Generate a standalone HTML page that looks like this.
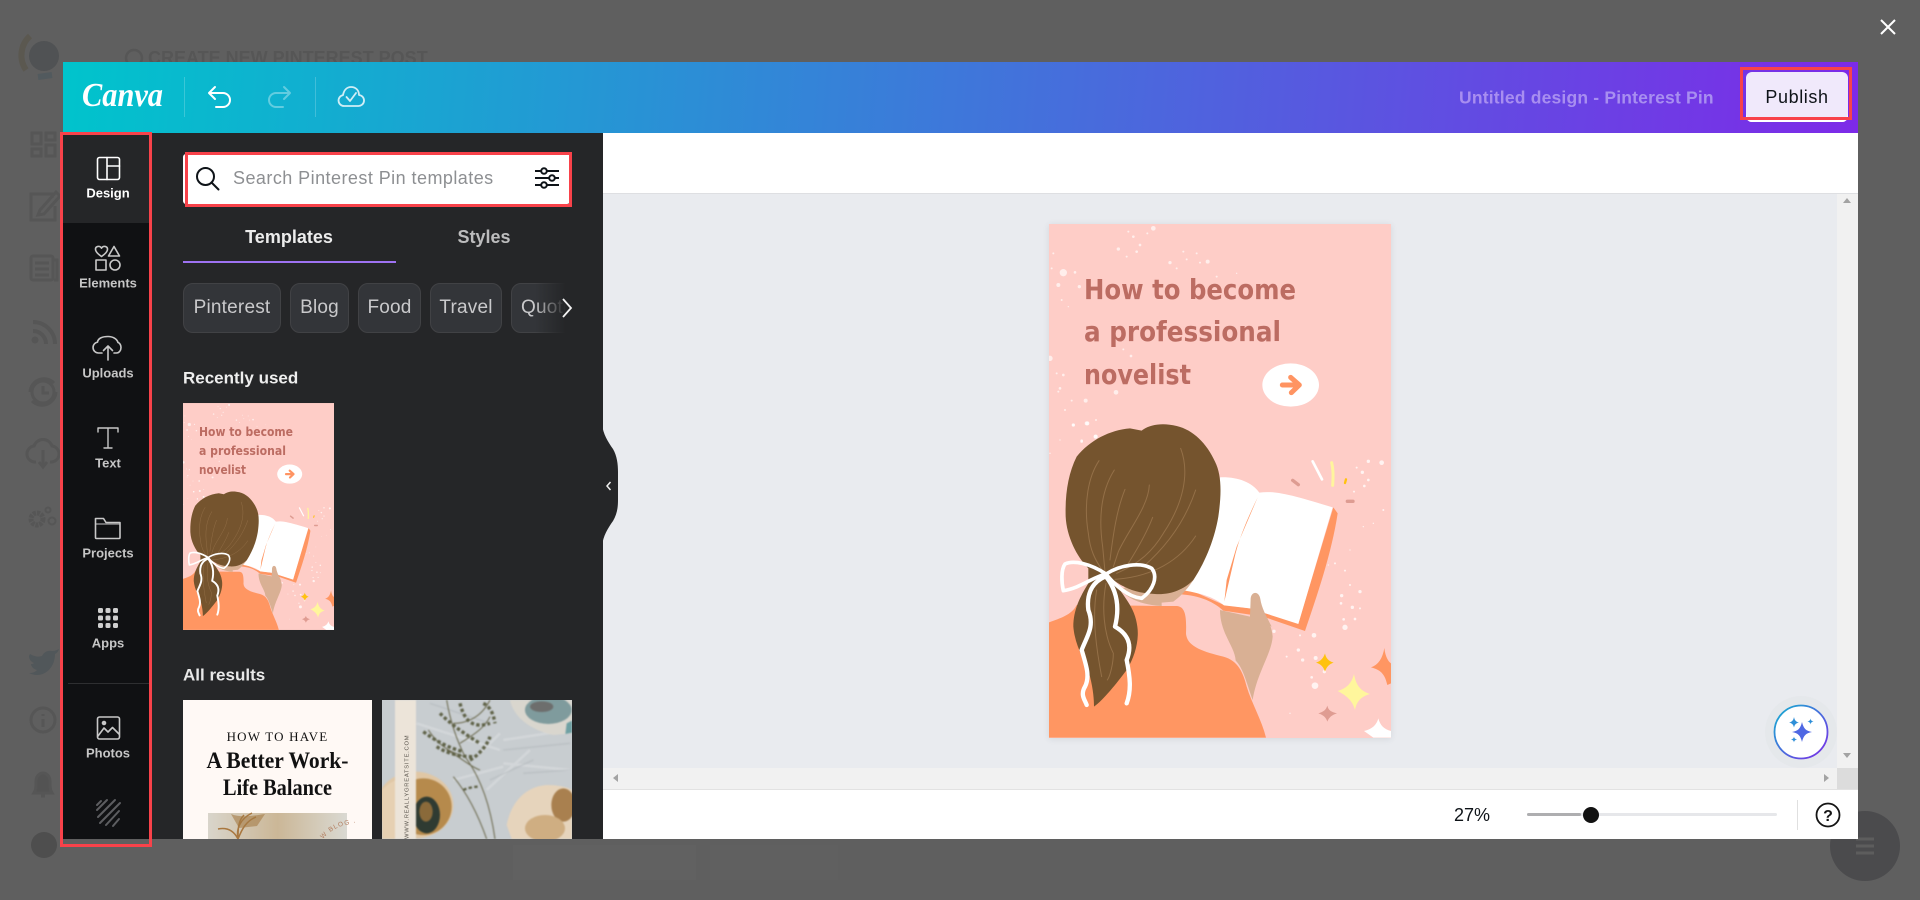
<!DOCTYPE html>
<html lang="en"><head><meta charset="utf-8"><title>Canva</title>
<style>
html,body{margin:0;padding:0;width:1920px;height:900px;overflow:hidden;background:#5f5f5f;font-family:"Liberation Sans",sans-serif}
.a{position:absolute}
.t{position:absolute;white-space:nowrap;line-height:1}
.c{transform:translate(-50%,-50%)}
.m{transform:translateY(-50%)}
.nav{position:absolute;left:108px;transform:translate(-50%,-50%);font-size:13px;font-weight:700;color:#c6c6c6;white-space:nowrap}
.chip{position:absolute;top:283px;height:48px;background:#333539;border:1px solid #414245;border-radius:10px;color:#c9c9cb;font-size:19px;letter-spacing:.2px;line-height:48px;text-align:center;box-sizing:content-box;overflow:hidden}
svg{position:absolute;overflow:visible}
</style></head>
<body>
<!-- dim page behind -->
<svg width="1920" height="900" style="left:0;top:0" fill="none" stroke="#565656" stroke-width="3">
<g><circle cx="44" cy="56" r="15" fill="#505254" stroke="none"/><path d="M30 36a26 26 0 0 0-4 34" stroke="#5b5850" stroke-width="6"/><path d="M38 77l14-2" stroke="#525a5e" stroke-width="6"/>
<rect x="32" y="133" width="9" height="11"/><rect x="46" y="133" width="9" height="7"/><rect x="32" y="149" width="9" height="7"/><rect x="46" y="145" width="9" height="11"/>
<path d="M52 198v-4H31v26h24v-14M40 210l16-18 4 4-16 18-6 1z"/>
<rect x="31" y="256" width="22" height="24" rx="2"/><path d="M35 263h14M35 269h14M35 275h14M54 260h3v20h-3"/>
<path d="M33 322a22 22 0 0 1 22 22M33 331a13 13 0 0 1 13 13" stroke-width="4"/><circle cx="35" cy="340" r="3.500" fill="#565656" stroke="none"/>
<circle cx="43" cy="392" r="11"/><path d="M30 392a14 14 0 0 1 24-9M56 392a14 14 0 0 1-24 9M43 386v7h6"/>
<path d="M36 462a8 8 0 0 1-2-16 9.500 9.500 0 0 1 18 0 8 8 0 0 1-2 16M43 450v16m-4-4l4 5 4-5"/>
<circle cx="37" cy="519" r="6" stroke-width="5" stroke-dasharray="3 1"/><circle cx="48" cy="510" r="2.500" stroke-width="2"/><circle cx="52" cy="521" r="3.500" stroke-width="2"/>
<path d="M31 650c5 3 9 3 12 2 2-4 6-6 10-5 3 0 5-1 7-2-1 3-2 4-4 5 0 12-8 21-18 21-3 0-6-1-8-2 4 0 6-1 8-3-4-1-6-4-6-6 1 0 2 0 3-1-3-1-5-4-5-7z" fill="#51575a" stroke="none" transform="translate(-1,4)"/>
<circle cx="43" cy="720" r="12"/><path d="M43 714v2M43 719v8"/>
<path d="M34 793c2-3 2-6 2-12 0-4 3-8 7-8s7 4 7 8c0 6 0 9 2 12zM41 796h4" fill="#535353"/>
<circle cx="44" cy="845" r="13" fill="#4e4e4e" stroke="none"/>
<circle cx="134" cy="58" r="8" stroke-width="2.500"/>
</g>
<rect x="513" y="845" width="183" height="35" fill="#616161" stroke="none"/><rect x="710" y="845" width="128" height="35" fill="#606060" stroke="none"/>
<circle cx="1865" cy="846" r="35" fill="#4b4b4d" stroke="none"/>
<path d="M1856 839h18M1856 846h18M1856 853h18" stroke="#5d5d5d" stroke-width="3"/>
</svg>
<div class="t" style="left:148px;top:49px;font-size:18px;font-weight:700;color:#565656">CREATE NEW PINTEREST POST</div>
<!-- close -->
<svg width="20" height="20" style="left:1878px;top:17px"><path d="M3 3l14 14M17 3L3 17" stroke="#fff" stroke-width="2"/></svg>

<!-- modal -->
<div class="a" style="left:63px;top:62px;width:1795px;height:777px;background:#fff;overflow:hidden"></div>
<div class="a" style="left:63px;top:62px;width:1795px;height:71px;background:linear-gradient(95deg,#00c4cc 0%,#7d2ae8 100%)"></div>
<!-- header content -->
<svg width="100" height="40" style="left:80px;top:78px"><text x="2" y="28" font-family="Liberation Serif,serif" font-style="italic" font-weight="700" font-size="34" fill="#fff" textLength="81" lengthAdjust="spacingAndGlyphs">Canva</text></svg>
<div class="a" style="left:184px;top:77px;width:1px;height:40px;background:rgba(255,255,255,.2)"></div>
<div class="a" style="left:315px;top:77px;width:1px;height:40px;background:rgba(255,255,255,.2)"></div>
<svg width="26" height="22" style="left:207px;top:86px" fill="none" stroke="#fff" stroke-width="2" stroke-linecap="round" stroke-linejoin="round"><path d="M8 1L2 7l6 6M2 7h14a7 7 0 0 1 0 14H9"/></svg>
<svg width="26" height="22" style="left:266px;top:86px" fill="none" stroke="#fff" stroke-opacity=".35" stroke-width="2" stroke-linecap="round" stroke-linejoin="round"><path d="M18 1l6 6-6 6M24 7H10a7 7 0 0 0 0 14h7"/></svg>
<svg width="28" height="24" style="left:337px;top:85px" fill="none" stroke="#fff" stroke-opacity=".8" stroke-width="1.800" stroke-linecap="round" stroke-linejoin="round"><path d="M7 21a5.500 5.500 0 0 1-1-10.900C7 5 10 2 14 2c5 0 8 3.500 8 8a5.500 5.500 0 0 1-1 11zM9.500 12l3.500 4 6-8"/></svg>
<div class="t m" style="left:1459px;top:98px;font-size:17.500px;font-weight:700;color:#a88ef0;letter-spacing:.19px">Untitled design - Pinterest Pin</div>
<div class="a" style="left:1746px;top:72px;width:102px;height:50px;background:#f0e9fb;border-radius:6px;box-shadow:inset 0 -3px 0 #fff"></div>
<div class="a" style="left:1740px;top:67px;width:106px;height:47px;border:3px solid #f8424a"></div>
<div class="t c" style="left:1797px;top:97px;font-size:18px;color:#0e1318;letter-spacing:.6px">Publish</div>

<!-- canvas area -->
<div class="a" style="left:603px;top:193px;width:1255px;height:1px;background:#dedfe2"></div>
<div class="a" style="left:603px;top:194px;width:1234px;height:574px;background:#e9ebef"></div>
<div class="a" style="left:1837px;top:194px;width:21px;height:574px;background:#f1f1f1"></div>
<div class="a" style="left:603px;top:768px;width:1234px;height:21px;background:#f1f1f1"></div>
<div class="a" style="left:1837px;top:768px;width:21px;height:21px;background:#dcdcdc"></div>
<div class="a" style="left:603px;top:789px;width:1255px;height:1px;background:#e2e2e2"></div>
<svg width="1920" height="900" style="left:0;top:0" fill="#a3a3a3"><path d="M1843 203l4-5 4 5zM1843 753h8l-4 5zM618 774l-5 4 5 4zM1824 774l5 4-5 4z"/></svg>
<div class="a" style="left:1049px;top:224px;width:342px;height:514px;box-shadow:0 1px 6px rgba(60,70,90,.12)"></div>

<svg width="0" height="0" style="left:0;top:0">
<symbol id="art" viewBox="0 0 342 514">
<rect width="342" height="514" fill="#fecdc7"/>
<g transform="translate(-19,196) scale(.33333)">
<g fill="#fff" fill-opacity=".65" transform="translate(0,-630)">
<circle cx="370" cy="55" r="7"/><circle cx="330" cy="105" r="4"/><circle cx="310" cy="80" r="4"/><circle cx="295" cy="65" r="3"/><circle cx="352" cy="70" r="3"/><circle cx="265" cy="117" r="5"/><circle cx="320" cy="125" r="4"/><circle cx="290" cy="140" r="3"/><circle cx="420" cy="158" r="5"/><circle cx="470" cy="148" r="3"/><circle cx="500" cy="130" r="3"/><circle cx="533" cy="155" r="6"/><circle cx="510" cy="158" r="3"/><circle cx="100" cy="188" r="11"/><circle cx="135" cy="187" r="4"/><circle cx="85" cy="225" r="6"/><circle cx="148" cy="230" r="5"/><circle cx="65" cy="175" r="3"/><circle cx="60" cy="445" r="8"/><circle cx="80" cy="490" r="3"/><circle cx="100" cy="495" r="4"/><circle cx="90" cy="535" r="4"/><circle cx="85" cy="545" r="3"/><circle cx="258" cy="547" r="7"/><circle cx="167" cy="572" r="6"/><circle cx="125" cy="572" r="3"/><circle cx="105" cy="600" r="3"/><circle cx="170" cy="640" r="6"/><circle cx="130" cy="645" r="4"/><circle cx="198" cy="630" r="3"/><circle cx="155" cy="695" r="4"/><circle cx="197" cy="680" r="6"/><circle cx="303" cy="438" r="4"/><circle cx="280" cy="418" r="3"/><circle cx="460" cy="125" r="3"/><circle cx="440" cy="175" r="3"/><circle cx="560" cy="200" r="3"/><circle cx="620" cy="190" r="2"/><circle cx="95" cy="270" r="3"/><circle cx="115" cy="290" r="2"/><circle cx="70" cy="130" r="3"/>
</g>
<g fill="#fff" fill-opacity=".75">
<circle cx="1055" cy="128" r="7"/><circle cx="1015" cy="124" r="5"/><circle cx="997" cy="157" r="5"/><circle cx="1015" cy="180" r="4"/><circle cx="1003" cy="198" r="4"/><circle cx="980" cy="143" r="3"/><circle cx="972" cy="215" r="3"/><circle cx="945" cy="622" r="8"/><circle cx="975" cy="597" r="4"/><circle cx="990" cy="515" r="5"/><circle cx="935" cy="527" r="5"/><circle cx="933" cy="550" r="4"/><circle cx="967" cy="562" r="5"/><circle cx="990" cy="565" r="3"/><circle cx="941" cy="598" r="4"/><circle cx="852" cy="646" r="7"/><circle cx="732" cy="634" r="5"/><circle cx="810" cy="646" r="3"/><circle cx="805" cy="690" r="5"/><circle cx="818" cy="720" r="5"/><circle cx="857" cy="714" r="6"/><circle cx="845" cy="772" r="4"/><circle cx="855" cy="797" r="10"/><circle cx="883" cy="755" r="5"/><circle cx="960" cy="495" r="3"/><circle cx="945" cy="452" r="3"/><circle cx="915" cy="430" r="3"/><circle cx="895" cy="435" r="2"/><circle cx="1030" cy="310" r="2"/><circle cx="1000" cy="320" r="2"/><circle cx="1060" cy="270" r="3"/><circle cx="960" cy="390" r="2"/><circle cx="780" cy="880" r="2"/><circle cx="770" cy="710" r="3"/><circle cx="60" cy="100" r="2"/><circle cx="90" cy="60" r="2"/><circle cx="130" cy="15" r="5"/><circle cx="172" cy="10" r="6"/><circle cx="197" cy="50" r="6"/><circle cx="155" cy="62" r="4"/>
</g>
<!-- speech blob + arrow -->
<ellipse cx="782" cy="-105" rx="85" ry="65" fill="#fff"/>
<path d="M757 -105H795M782 -128L808 -105 784 -82" stroke="#ff9462" stroke-width="15" fill="none" stroke-linecap="round" stroke-linejoin="round"/>
<!-- marks -->
<g fill="none" stroke-linecap="round"><path d="M848 124l28 54" stroke="#fff" stroke-width="8"/><path d="M905 128c5 20 5 45 3 68" stroke="#fff59d" stroke-width="9"/><path d="M948 178l-3 11" stroke="#ffc20e" stroke-width="7"/><path d="M788 181l17 13" stroke="#de9c92" stroke-width="10"/><path d="M952 244h17" stroke="#de9c92" stroke-width="10"/></g>
<!-- shirt -->
<path d="M57 607C90 595 125 585 140 555L395 558 440 558C465 560 470 585 468 640 470 680 520 695 580 710 625 722 640 760 650 800 665 850 695 900 708 953H57Z" fill="#ff9662"/>
<!-- hand -->
<path d="M662 535C665 513 687 513 691 537 697 570 725 610 728 650 725 700 680 760 668 840 650 790 640 745 617 722 615 680 570 640 570 570L660 590Z" fill="#d9b094"/>
<!-- book -->
<path d="M910 262L923 280C905 400 860 530 825 633L700 590 580 572C545 540 500 525 440 522L470 505 582 555 660 565 805 610Z" fill="#ff9662"/>
<path d="M570 172C620 170 665 185 688 218 740 210 800 230 908 262L805 612 660 565 582 556C550 530 510 520 465 512L535 390Z" fill="#fff"/>
<path d="M662 535C665 513 687 513 691 537 695 565 710 590 725 620L660 590Z" fill="#d9b094"/>
<path d="M683 232C650 300 625 360 612 420L583 545 590 480 620 380Z" fill="#ff9662"/>
<!-- neck -->
<path d="M535 380C520 440 480 510 430 545L395 548V558C340 555 300 540 270 510L400 440Z" fill="#d9b094"/>
<!-- hair -->
<path d="M335 32C360 12 400 8 440 18 490 30 530 70 555 125 575 165 575 220 565 290 555 350 530 420 490 480 460 510 420 525 375 522 330 520 290 510 250 480 280 530 315 560 322 620 328 660 315 710 290 750 260 790 220 840 192 860 192 840 190 810 180 770 165 720 135 680 130 620 130 570 150 530 175 490L175 445C140 410 110 350 107 290 105 220 115 160 140 110 180 60 240 30 300 25Z" fill="#75542e"/>
<g fill="none" stroke="#947048" stroke-width="3" stroke-linecap="round">
<path d="M207 122C175 170 160 250 175 340 180 390 195 420 220 455"/><path d="M253 150C215 210 205 290 218 380L225 455"/><path d="M285 208C260 270 250 340 240 420"/><path d="M358 195C355 260 295 330 265 395L250 440"/><path d="M368 292C350 340 320 390 295 430"/><path d="M452 85C480 160 460 250 400 340 370 390 330 430 260 460"/><path d="M497 210C470 290 420 370 340 440"/><path d="M497 348C450 420 370 470 255 478"/><path d="M200 510C190 570 190 640 215 770"/><path d="M228 490C215 560 220 640 250 700 250 730 240 770 232 780"/></g>
<!-- ribbon -->
<g fill="none" stroke="#fff" stroke-linejoin="round" stroke-linecap="round">
<path d="M228 462C180 430 130 420 105 432 92 450 95 490 100 512 150 505 190 470 228 462" stroke-width="11"/>
<path d="M228 462C270 435 330 425 365 445 385 470 370 510 335 535 290 530 250 490 228 462" stroke-width="11"/>
<path d="M225 470C180 490 170 530 175 570 195 620 170 650 155 690 170 740 180 770 165 800 150 825 165 840 170 855" stroke-width="13"/>
<path d="M228 470C260 510 270 560 255 620 290 640 310 670 290 720 300 770 305 810 290 850" stroke-width="13"/></g>
<!-- stars -->
<path d="M972 762C978 795 990 812 1020 822 992 830 980 845 975 870 968 845 955 830 923 813 950 805 965 790 972 762Z" fill="#fff69c"/>
<path d="M1063 684C1066 710 1075 725 1083 730V790L1072 795C1065 765 1055 750 1023 742 1045 735 1058 715 1063 684Z" fill="#ff9662"/>
<path d="M885 700C888 715 895 722 911 728 897 733 890 740 885 755 880 740 873 733 858 728 873 722 880 715 885 700Z" fill="#ffc20e"/>
<path d="M892 857C895 870 902 876 921 880 905 885 897 892 892 905 888 892 880 885 865 880 880 876 888 870 892 857Z" fill="#df9c92"/>
<path d="M1045 895C1050 915 1062 928 1083 933V953H1030L1002 933C1025 928 1040 915 1045 895Z" fill="#fff"/>
</g>
</symbol>
</svg>

<!-- big design -->
<svg width="342" height="514" style="left:1049px;top:224px"><use href="#art" width="342" height="514"/>
<g font-family="DejaVu Sans,sans-serif" font-weight="700" font-size="28" fill="#bc6c62">
<text x="35" y="75" textLength="212" lengthAdjust="spacingAndGlyphs">How to become</text>
<text x="35" y="117" textLength="197" lengthAdjust="spacingAndGlyphs">a professional</text>
<text x="35" y="160" textLength="107" lengthAdjust="spacingAndGlyphs">novelist</text></g></svg>

<!-- AI button -->
<svg width="60" height="60" style="left:1771px;top:702px"><defs><linearGradient id="ag" x1="0" y1="0" x2="1" y2="1"><stop offset="0" stop-color="#12b2d0"/><stop offset="1" stop-color="#7d2ae8"/></linearGradient></defs>
<circle cx="30" cy="30" r="36" fill="#dfe1e6" fill-opacity=".35"/><circle cx="30" cy="30" r="26.500" fill="#fff" stroke="url(#ag)" stroke-width="1.800"/>
<path d="M31 20c1.500 6.500 4 9 10 10-6 1-8.500 3.500-10 10-1.500-6.500-4-9-10-10 6-1 8.500-3.500 10-10z" fill="#4f68e3"/>
<path d="M23 15c.7 3.500 2 4.800 5 5.500-3 .7-4.300 2-5 5-.7-3-2-4.300-5-5 3-.7 4.300-2 5-5.500zM39.500 16.500c.3 1.800 1 2.500 3 3-2 .5-2.700 1.200-3 3-.3-1.800-1-2.500-3-3 2-.5 2.700-1.200 3-3zM23 34.500c.3 1.800 1 2.500 3 3-2 .5-2.700 1.200-3 3-.3-1.800-1-2.500-3-3 2-.5 2.700-1.200 3-3z" fill="#2f8fd8"/></svg>

<!-- bottom bar -->
<div class="t c" style="left:1472px;top:815px;font-size:18px;color:#0e1318">27%</div>
<div class="a" style="left:1527px;top:813px;width:250px;height:3px;background:#e6e7ea;border-radius:2px"></div>
<div class="a" style="left:1527px;top:813px;width:54px;height:3px;background:#aeaeb0;border-radius:2px"></div>
<div class="a" style="left:1583px;top:807px;width:16px;height:16px;border-radius:50%;background:#121212"></div>
<div class="a" style="left:1797px;top:800px;width:1px;height:30px;background:#e0e0e0"></div>
<svg width="26" height="26" style="left:1815px;top:802px"><circle cx="13" cy="13" r="11.500" fill="none" stroke="#151515" stroke-width="1.800"/><text x="13" y="19" text-anchor="middle" font-size="16" font-weight="700" fill="#151515">?</text></svg>

<!-- side panel -->
<div class="a" style="left:149px;top:133px;width:454px;height:706px;background:#252628"></div>
<svg width="20" height="124" style="left:602px;top:424px"><path d="M0 0C1 10 6 18 11 25 15 32 16 40 16 48V76C16 84 15 90 11 97 6 104 1 112 0 122Z" fill="#252628"/><path d="M8.500 58l-3.500 4 3.500 4" stroke="#eee" stroke-width="1.500" fill="none"/></svg>

<!-- left nav -->
<div class="a" style="left:63px;top:133px;width:86px;height:706px;background:#101113"></div>
<div class="a" style="left:63px;top:133px;width:86px;height:90px;background:#252628"></div>
<div class="a" style="left:68px;top:683px;width:81px;height:1px;background:#2e2f31"></div>
<svg width="90" height="710" style="left:63px;top:133px" fill="none" stroke="#c8c8c8" stroke-width="1.600" stroke-linejoin="round" stroke-linecap="round">
<g stroke="#fff"><rect x="34.500" y="24.500" width="22" height="22" rx="2"/><path d="M44 24.500v22M44 33h12.500"/></g>
<path d="M51 113.500l-5.500 9.500h11zM38.500 123.500c-5-3.500-6-5.500-6-7.300 0-3 4.500-4 6-1 1.500-3 6-2 6 1 0 1.800-1 3.800-6 7.300z"/><rect x="33" y="127" width="10" height="10"/><circle cx="52" cy="132" r="5"/>
<path d="M39 220h-3.500a5.500 5.500 0 0 1-1-10.900C35 205 40 203.500 45 203.500c5 0 9 2.500 10 6 2 .5 3 3 3 5 0 3-2 5.500-4.500 5.500H51M45 227v-14m-4.500 4.500L45 213l4.500 4.500"/>
<path d="M35 299v-4h20v4M45 295v20M41 315h8" stroke-width="1.400"/>
<path d="M32.500 404V385.500h8l2.500 4h14v15a1 1 0 0 1-1 1H33.500a1 1 0 0 1-1-1z"/><path d="M32.500 391h24.500" stroke-width="1"/>
<g fill="#cfcfcf" stroke="none"><rect x="35" y="475" width="5" height="5" rx="1.500"/><rect x="42.500" y="475" width="5" height="5" rx="1.500"/><rect x="50" y="475" width="5" height="5" rx="1.500"/><rect x="35" y="482.500" width="5" height="5" rx="1.500"/><rect x="42.500" y="482.500" width="5" height="5" rx="1.500"/><rect x="50" y="482.500" width="5" height="5" rx="1.500"/><rect x="35" y="490" width="5" height="5" rx="1.500"/><rect x="42.500" y="490" width="5" height="5" rx="1.500"/><rect x="50" y="490" width="5" height="5" rx="1.500"/></g>
<rect x="34.500" y="584" width="22" height="22" rx="2"/><path d="M35 603l6-8 4 4 4.500-4.500 6.500 6.500"/><circle cx="41" cy="590" r="1.500" fill="#c8c8c8"/>
<g stroke="#5d5e61" stroke-width="2"><path d="M34 677l10-10M35 684l17-17M37 690l20-20M43 692l13-14M50 693l6-7M34 672l4-4"/></g>
</svg>
<div class="nav" style="top:193px;color:#fff">Design</div>
<div class="nav" style="top:283px">Elements</div>
<div class="nav" style="top:373px">Uploads</div>
<div class="nav" style="top:463px">Text</div>
<div class="nav" style="top:553px">Projects</div>
<div class="nav" style="top:643px">Apps</div>
<div class="nav" style="top:753px">Photos</div>
<div class="a" style="left:60px;top:132px;width:86px;height:709px;border:3px solid #f8424a"></div>

<!-- search -->
<div class="a" style="left:183px;top:154px;width:387px;height:50px;background:#fff;border-radius:3px"></div>
<div class="a" style="left:185px;top:152px;width:381px;height:49px;border:3px solid #f8424a"></div>
<svg width="26" height="26" style="left:195px;top:166px" fill="none" stroke="#0e1318" stroke-width="2" stroke-linecap="round"><circle cx="10.500" cy="10.500" r="8.500"/><path d="M16.500 16.500l7 7"/></svg>
<div class="t m" style="left:233px;top:178px;font-size:18px;color:#8d8f92;letter-spacing:.45px">Search Pinterest Pin templates</div>
<svg width="26" height="26" style="left:534px;top:165px" fill="none" stroke="#0e1318" stroke-width="2"><path d="M1 6h6M13 6h12M1 13h14M21 13h4M1 20h6M13 20h12"/><circle cx="10" cy="6" r="2.800"/><circle cx="18" cy="13" r="2.800"/><circle cx="10" cy="20" r="2.800"/></svg>

<!-- tabs -->
<div class="t c" style="left:289px;top:237px;font-size:18px;font-weight:700;color:#ececec">Templates</div>
<div class="t c" style="left:484px;top:237px;font-size:18px;font-weight:700;color:#bdbdbe">Styles</div>
<div class="a" style="left:183px;top:261px;width:213px;height:2px;background:#9e72f2"></div>

<!-- chips -->
<div class="chip" style="left:183px;width:96px">Pinterest</div>
<div class="chip" style="left:290px;width:57px">Blog</div>
<div class="chip" style="left:358px;width:61px">Food</div>
<div class="chip" style="left:430px;width:70px">Travel</div>
<div class="a" style="left:511px;top:283px;width:59px;height:50px;overflow:hidden"><div class="chip" style="left:0;top:0;width:90px;text-align:left;text-indent:9px">Quotes</div></div>
<div class="a" style="left:535px;top:283px;width:36px;height:50px;background:linear-gradient(90deg,rgba(37,38,40,0),#252628 85%)"></div>
<svg width="14" height="22" style="left:561px;top:297px"><path d="M2 2l8 9-8 9" fill="none" stroke="#f2f2f2" stroke-width="1.800"/></svg>

<div class="t m" style="left:183px;top:378px;font-size:17px;font-weight:700;color:#eee">Recently used</div>
<svg width="151" height="227" style="left:183px;top:403px"><use href="#art" width="151" height="227"/>
<g font-family="DejaVu Sans,sans-serif" font-weight="700" font-size="12.500" fill="#bc6c62">
<text x="16" y="33" textLength="94" lengthAdjust="spacingAndGlyphs">How to become</text>
<text x="16" y="52" textLength="87" lengthAdjust="spacingAndGlyphs">a professional</text>
<text x="16" y="71" textLength="47" lengthAdjust="spacingAndGlyphs">novelist</text></g></svg>

<div class="t m" style="left:183px;top:675px;font-size:17px;font-weight:700;color:#e8e8e8">All results</div>

<!-- result cards -->
<div class="a" style="left:183px;top:700px;width:189px;height:139px;overflow:hidden;background:#fff9f5">
<svg width="189" height="139" style="left:0;top:0"><defs><linearGradient id="pg" x1="0" x2="1"><stop offset="0" stop-color="#d9d5cb"/><stop offset=".5" stop-color="#cbb797"/><stop offset="1" stop-color="#dad9d2"/></linearGradient><path id="circ" d="M140 139A40 40 0 0 1 180 125"/></defs>
<rect x="25" y="113" width="139" height="26" fill="url(#pg)"/>
<g stroke="#a9773f" stroke-width="1.500" fill="none"><path d="M55 139c-2-10 2-20 14-26M55 139c-4-8-10-12-20-10M55 139c0-10 0-18 6-24M55 139c4-10 8-18 18-22"/></g>
<path d="M48 114c10 4 20 2 34 0l-8 12-18 2z" fill="#a57c46" fill-opacity=".6"/>
<g font-family="Liberation Serif,serif" text-anchor="middle" fill="#111"><text x="94.500" y="41" font-size="13" letter-spacing="1.200">HOW TO HAVE</text>
<text x="94.500" y="68" font-size="23.500" font-weight="700" textLength="142" lengthAdjust="spacingAndGlyphs">A Better Work-</text>
<text x="94.500" y="95" font-size="23.500" font-weight="700" textLength="109" lengthAdjust="spacingAndGlyphs">Life Balance</text></g>
<text font-family="Liberation Sans,sans-serif" font-size="6.500" fill="#b27d5f" letter-spacing="1"><textPath href="#circ">W BLOG ·</textPath></text></svg>
</div>
<div class="a" style="left:382px;top:700px;width:190px;height:139px;overflow:hidden;background:#c8cdd0">
<svg width="190" height="139" style="left:0;top:0;filter:blur(.7px)">
<g transform="scale(.33333) translate(-636,-30)">
<g stroke="#dfe2e4" stroke-width="8" fill="none" stroke-opacity=".45"><path d="M1000 150l200-30M950 300l130-120M1000 220l200 20M740 100l250 80M850 270l150-40M990 130l-60 60"/></g>
<g stroke="#aeb4b8" stroke-width="4" fill="none" stroke-opacity=".5"><path d="M1000 180l200-20M960 270l130-60M1060 250l140-10M780 40l180 60"/></g>
<path d="M1020 30C1030 80 1080 120 1150 135L1206 130V30Z" fill="#d9d6ce"/><ellipse cx="1135" cy="60" rx="70" ry="42" fill="#7f9b9d"/><ellipse cx="1115" cy="50" rx="35" ry="16" fill="#6d6e6d"/><path d="M1190 100l16-8v36l-20 4z" fill="#6ea0a3"/>
<path d="M1010 405C1025 330 1070 290 1130 285 1160 285 1190 290 1206 300V447H1025Z" fill="#e6d4bc"/><ellipse cx="1180" cy="345" rx="36" ry="50" fill="#a9804f"/><ellipse cx="1125" cy="415" rx="60" ry="40" fill="#cfae82"/>
<ellipse cx="735" cy="345" rx="115" ry="100" fill="#e0c7a5"/><ellipse cx="760" cy="350" rx="85" ry="85" fill="#b68a4c"/><ellipse cx="770" cy="375" rx="40" ry="55" fill="#2f3b32"/><ellipse cx="768" cy="365" rx="20" ry="30" fill="#8a6a3a"/>
<path d="M636 300c20-20 30-25 39-28v175h-39z" fill="#e6d0b2"/>
<rect x="675" y="30" width="63" height="417" fill="#ece4d9"/>
<g stroke="#6a684c" fill="none"><path d="M975 447C960 340 930 260 885 200 860 150 840 90 830 30" stroke-width="3"/><path d="M850 260C900 320 930 390 950 447" stroke-width="3"/><path d="M930 240c-30-10-60-40-100-60M885 200c-30-10-70-20-110-80M870 160c30-20 70-40 90-80M850 100c30 0 80-10 110-70" stroke-width="3"/></g>
<g stroke="#5e6146" stroke-width="10" fill="none" stroke-dasharray="10 7"><path d="M760 125c40 30 80 50 120 60"/><path d="M810 70c30 30 70 60 120 90"/><path d="M870 40c10 40 30 80 90 60"/><path d="M900 210c20-10 50-40 60-70"/><path d="M800 170c30 20 70 30 110 30"/><path d="M940 40c20 10 30 30 35 60"/><path d="M880 300c10-5 30-10 45-10" stroke-width="7"/></g>
</g></svg>
<svg width="24" height="139" style="left:13px;top:0"><text transform="translate(13.500,139) rotate(-90)" font-family="Liberation Sans,sans-serif" font-size="5.800" fill="#5b564e" letter-spacing=".75">WWW.REALLYGREATSITE.COM</text></svg>
</div>
</body></html>
